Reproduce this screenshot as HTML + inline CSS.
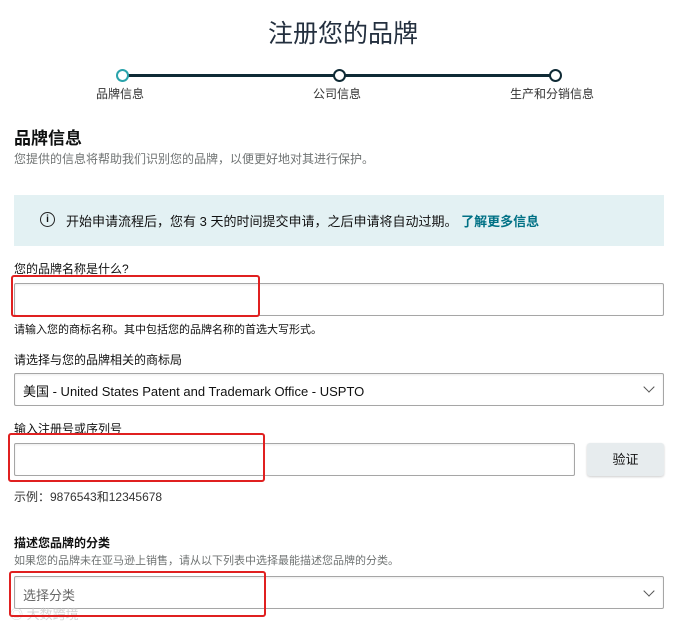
<!DOCTYPE html>
<html><head><meta charset="utf-8"><style>
body{margin:0;width:686px;height:624px;background:#fff;position:relative;overflow:hidden;font-family:"Liberation Sans","Noto Sans CJK SC",sans-serif;color:#0f1111}
.a{position:absolute;white-space:nowrap}
.box{position:absolute;border:1px solid #a6a6a6;border-radius:2px;background:#fff;box-shadow:inset 0 1px 2px rgba(0,0,0,.08)}
.red{position:absolute;border:2.5px solid #e02020;border-radius:3px}
.chev{position:absolute;width:7px;height:7px;border-right:1.5px solid #555;border-bottom:1.5px solid #555;transform:rotate(45deg)}
</style></head><body>
<div class="a" style="left:0;width:686px;text-align:center;top:14px;font-size:25px;color:#232f3e">注册您的品牌</div>
<div class="a" style="left:122px;top:74px;width:433px;height:3px;background:#0f2a35"></div>
<div class="a" style="left:116px;top:69px;width:9px;height:9px;border:2px solid #2aa3ab;border-radius:50%;background:#fff"></div>
<div class="a" style="left:333px;top:69px;width:9px;height:9px;border:2px solid #0f2a35;border-radius:50%;background:#fff"></div>
<div class="a" style="left:549px;top:69px;width:9px;height:9px;border:2px solid #0f2a35;border-radius:50%;background:#fff"></div>
<div class="a" style="left:96px;top:85px;font-size:12px;color:#333">品牌信息</div>
<div class="a" style="left:313px;top:85px;font-size:12px;color:#333">公司信息</div>
<div class="a" style="left:510px;top:85px;font-size:12px;color:#333">生产和分销信息</div>
<div class="a" style="left:14px;top:124px;font-size:17px;font-weight:bold;color:#0f1111">品牌信息</div>
<div class="a" style="left:14px;top:150px;font-size:12px;color:#6f7373">您提供的信息将帮助我们识别您的品牌，以便更好地对其进行保护。</div>
<div class="a" style="left:14px;top:195px;width:650px;height:51px;background:#e3f1f3"></div>
<div class="a" style="left:40px;top:212px;width:13px;height:13px;border:1.5px solid #222;border-radius:50%;font-size:10px;line-height:13px;text-align:center;font-weight:bold">i</div>
<div class="a" style="left:66px;top:211px;font-size:13px;color:#111">开始申请流程后，您有 3 天的时间提交申请，之后申请将自动过期。 <b style="color:#007185">了解更多信息</b></div>
<div class="a" style="left:14px;top:260px;font-size:12px;color:#111">您的品牌名称是什么?</div>
<div class="box" style="left:14px;top:283px;width:648px;height:31px"></div>
<div class="a" style="left:14px;top:321px;font-size:11px;color:#111">请输入您的商标名称。其中包括您的品牌名称的首选大写形式。</div>
<div class="a" style="left:14px;top:351px;font-size:12px;color:#111">请选择与您的品牌相关的商标局</div>
<div class="box" style="left:14px;top:373px;width:648px;height:31px"></div>
<div class="a" style="left:23px;top:381px;font-size:13px;color:#111">美国 - United States Patent and Trademark Office - USPTO</div>
<div class="chev" style="left:645px;top:383px"></div>
<div class="a" style="left:14px;top:420px;font-size:12px;color:#111">输入注册号或序列号</div>
<div class="box" style="left:14px;top:443px;width:559px;height:31px"></div>
<div class="a" style="left:587px;top:443px;width:77px;height:33px;background:#e7ecee;border-radius:3px;box-shadow:0 1px 2px rgba(0,0,0,.2);font-size:13px;line-height:33px;text-align:center;color:#111">验证</div>
<div class="a" style="left:14px;top:488px;font-size:12px;color:#333">示例：9876543和12345678</div>
<div class="a" style="left:14px;top:534px;font-size:12px;font-weight:bold;color:#111">描述您品牌的分类</div>
<div class="a" style="left:14px;top:552px;font-size:11px;color:#6f7373">如果您的品牌未在亚马逊上销售，请从以下列表中选择最能描述您品牌的分类。</div>
<div class="box" style="left:14px;top:576px;width:648px;height:31px"></div>
<div class="a" style="left:23px;top:585px;font-size:13px;color:#666">选择分类</div>
<div class="chev" style="left:645px;top:587px"></div>
<div class="a" style="left:10px;top:604px;font-size:13px;color:#ccc;opacity:.8">◎ 大数跨境</div>
<div class="red" style="left:11px;top:275px;width:245px;height:38px"></div>
<div class="red" style="left:8px;top:433px;width:253px;height:45px"></div>
<div class="red" style="left:9px;top:571px;width:253px;height:42px"></div>
</body></html>
